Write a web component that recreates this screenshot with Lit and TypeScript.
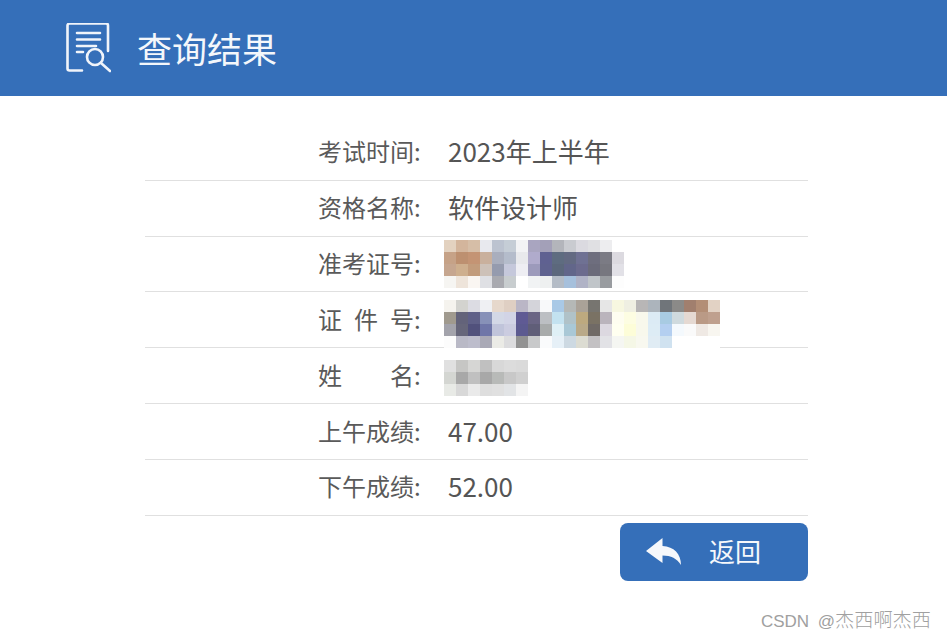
import { LitElement, html, css } from "lit";
import { customElement } from "lit/decorators.js";

const m1 = [
  "e3d2c0 d3b59c d6bea7 e8e9ee bcc3d0 c5cdd6 f2f3f5 a9a5c0 a3a0b8 b3b5bb c9cbd0 dbdae0 e0e0e3 ededef ffffff",
  "c6a287 bd9070 c49474 c9b09d a9aebd b4bccb e8e9ec b0abcc 5f6191 5e6c80 636a82 6f7193 6e6e7e 7b7b84 dcdae0",
  "c6a68f ceaf8e c29c7c cdc1b8 959bae c5c8db eeeef3 9c9abb 5f628f 5c687c 62668a 6c6b8e 6b6b7a 77777f e2e1e7",
  "f6f5f2 eee4da faf6f2 dfe0e4 a9aab0 c8cdcf ffffff f1f3f4 eef0f0 b4bcc6 a6c0dc b0b3c6 c0c5c9 999ca0 fdfdfd",
];
const m2 = [
  "f5f3ee d3d3cf dcdce3 eff0f3 e6d8cc dfcfc3 bab6c6 d4d4da f8f9fa a9c9e6 b5b8b6 aaa298 777570 e6e6e6 f7f7e0 efefe2 b8b6b6 acb4bc 70757a 8b8a88 a17f6e b38e76 e2d2c4",
  "a09a8e 63637a 5f6088 8791b8 d3d8e6 d2d4e6 5f5a94 6a6584 bcbfc3 c3e2f0 b0c2c8 bda97f 7a7264 bab4bc fefdf0 fdfde2 f8f8ec dcebf5 a8cbe2 cfdade e5d9d2 ba9a86 bfa08e",
  "a3a3ab 66667a 51517c 6f76a8 c0c4da cbcce0 5c5a90 605e78 a8abab dff0f6 a9c8d6 b9a988 706a66 dcd8e0 fffff0 fdfdd8 f8f8ec ddecf5 b4cff0 f4f9fd fafafa efe9e4 f8f6f0",
  "fcfcfc b9b9c6 bdbdcc a9a9b6 ebebe6 dcdcde 929292 c8c9ca fafbfc e6f0f7 cdd9e2 dcdcd2 c3c1c3 e2e2e6 f5f6f2 f5f7e6 f8f8ef e0ecf4 d0e2f0 ffffff ffffff ffffff ffffff",
];
const m3 = [
  "e0e0e0 c6c6c4 d6d6d4 c0c0c0 d8d8d8 dcdcdc dadada",
  "d4d6d2 a8a8a8 c0c0c0 a8a8a8 b8bab8 c8c8c8 d0d0d0",
  "e8eae6 d8d8d8 eaeaea dedede e0e0e0 e2e4e6 f4f4f4",
];

type Row = { label: string; spaced?: boolean; value?: string; mosaic?: string[] };
const rows: Row[] = [
  { label: "考试时间", value: "2023年上半年" },
  { label: "资格名称", value: "软件设计师" },
  { label: "准考证号", mosaic: m1 },
  { label: "证 件 号", spaced: true, mosaic: m2 },
  { label: "姓 名", spaced: true, mosaic: m3 },
  { label: "上午成绩", value: "47.00" },
  { label: "下午成绩", value: "52.00" },
];

@customElement("app-root")
export class AppRoot extends LitElement {
  static styles = css`
    :host {
      display: block;
      position: relative;
      width: 947px;
      height: 639px;
      overflow: hidden;
      background: #fff;
      font-family: "Noto Sans CJK SC", "Noto Sans", sans-serif;
      color: #555;
    }
    .header {
      height: 96px;
      background: #356fb9;
      display: flex;
      align-items: center;
      padding-left: 65px;
      gap: 26px;
      box-sizing: border-box;
    }
    .header svg { display: block; width: 46px; height: 50px; flex: none; }
    .title {
      color: #f4f7fb;
      font-size: 35px;
      line-height: 48px;
      font-weight: 400;
    }
    .body {
      margin: 29px 139px 0 145px;
    }
    .row {
      height: 55.83px;
      box-sizing: border-box;
      border-bottom: 1px solid #e0e0e0;
      padding: 0 0 2px 173px;
      display: flex;
      align-items: center;
    }
    .label {
      width: 130px;
      flex: none;
      display: flex;
      font-size: 24px;
      line-height: 32px;
      color: #5a5a5a;
    }
    .chars { width: 96px; flex: none; }
    .chars.spaced { text-align: justify; text-align-last: justify; }
    .value {
      font-size: 26px;
      line-height: 34px;
      color: #555;
      position: relative;
      height: 34px;
    }
    .mosaic {
      position: absolute;
      left: -4px;
      display: grid;
      grid-auto-rows: 12px;
      grid-auto-columns: 12px;
      grid-auto-flow: column;
      filter: blur(0.6px);
    }
    .mosaic.m0 { top: -6px; }
    .mosaic.m1 { top: -2px; }
    .mosaic.m2 { top: 2px; }
    .cell { width: 12px; height: 12px; }
    .actions {
      display: flex;
      justify-content: flex-end;
      margin-top: 7px;
    }
    .back {
      width: 188px;
      height: 58px;
      border: none;
      border-radius: 8px;
      background: #356fb9;
      color: #f6f8fb;
      font-family: inherit;
      font-size: 26px;
      display: flex;
      align-items: center;
      padding: 0 0 0 26px;
      box-sizing: border-box;
    }
    .back svg { display: block; width: 35px; height: 27px; flex: none; margin-right: 28px; margin-bottom: 1px; }
    .back span { padding-bottom: 2px; }
    .watermark {
      position: absolute;
      right: 16px;
      bottom: 5px;
      font-size: 17px;
      line-height: 24px;
      word-spacing: 4px;
      color: #a0a0a0;
      font-family: "Liberation Sans", "Noto Sans CJK SC", sans-serif;
    }
    .watermark .cjk {
      font-family: "Noto Sans CJK SC", sans-serif;
      font-size: 19.2px;
      font-weight: 300;
    }
  `;

  private mosaic(data: string[], i: number) {
    const grid = data.map((r) => r.split(" "));
    return html`<div class="mosaic m${i}" style="grid-template-rows:repeat(${grid.length},12px)">
      ${grid[0].map((_, c) =>
        grid.map((r) => html`<div class="cell" style="background:#${r[c]}"></div>`)
      )}
    </div>`;
  }

  render() {
    let mi = 0;
    return html`
      <div class="header">
        <svg viewBox="0 0 46 50" fill="none" stroke="#f0f4fa" stroke-width="2.6" stroke-linecap="round" stroke-linejoin="round">
          <path d="M17 47.5H4.5a2 2 0 0 1-2-2V2.5a2 2 0 0 1 2-2H41a2 2 0 0 1 2 2V28" />
          <path d="M12 10H35M12 16.5H35M12 23H31M12 29H18" />
          <circle cx="30" cy="34" r="8" />
          <path d="M36 40L45 48" />
        </svg>
        <div class="title">查询结果</div>
      </div>
      <div class="body">
        ${rows.map((r) => html`
          <div class="row">
            <div class="label">
              <span class="chars ${r.spaced ? "spaced" : ""}">${r.label}</span><span>:</span>
            </div>
            <div class="value">
              ${r.mosaic ? this.mosaic(r.mosaic, mi++) : r.value}
            </div>
          </div>
        `)}
        <div class="actions">
          <button class="back">
            <svg viewBox="0 0 35 27" fill="#f6f8fb">
              <path d="M0 13L16.5 0V8C28 8.500 35 16 35 27C31 20.500 25 17.500 16.500 17.500V25Z" />
            </svg>
            <span>返回</span>
          </button>
        </div>
      </div>
      <div class="watermark">CSDN @<span class="cjk">杰西啊杰西</span></div>
    `;
  }
}
